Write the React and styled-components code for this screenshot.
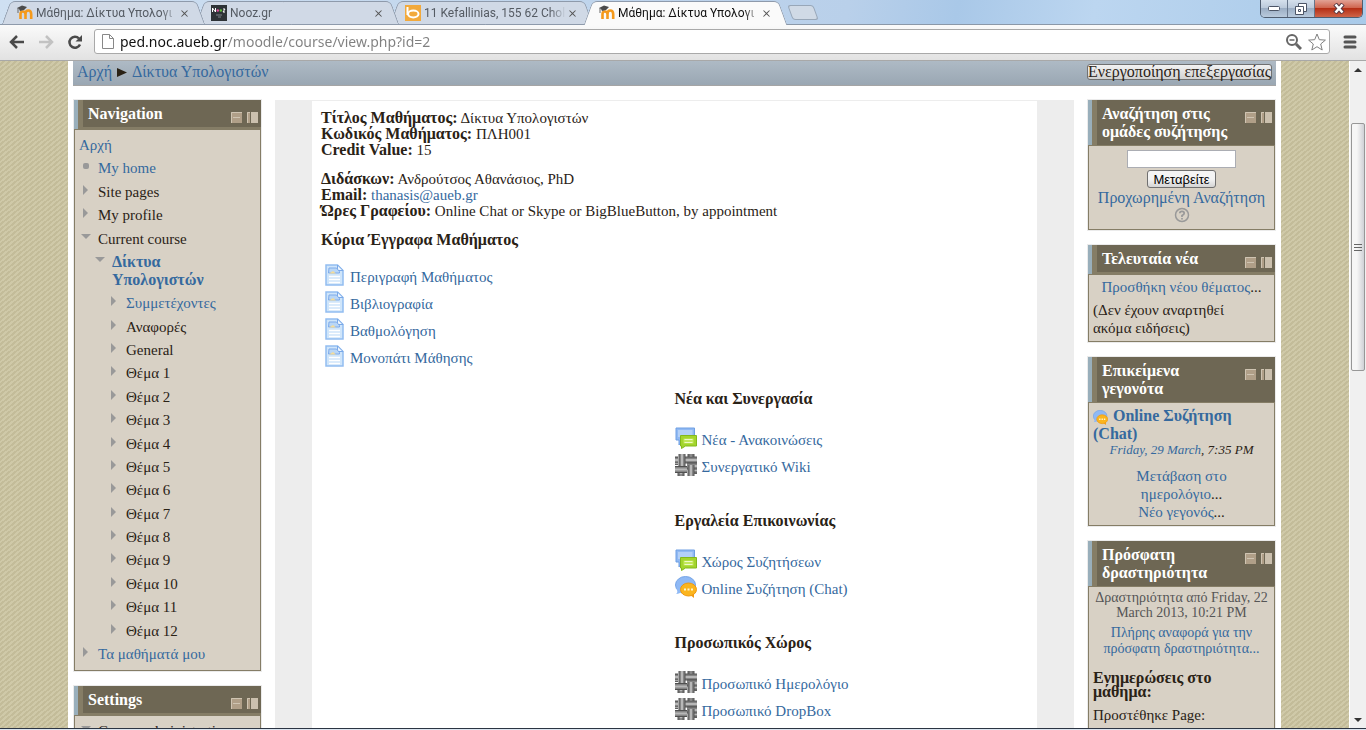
import React from 'react';
import styled, { createGlobalStyle, css } from 'styled-components';
import { HiMiniXMark } from 'react-icons/hi2';

const COLORS = {
  link: '#35699e',
  text: '#2a2216',
  head: '#6e6754',
  olive: '#857d66',
  sand: '#d8d1c5',
  strip: '#99afbb',
  grey: '#ededed',
};

const TABS = [
  { id: 1, icon: 'moodle', title: 'Μάθημα: Δίκτυα Υπολογι' },
  { id: 2, icon: 'nooz', title: 'Nooz.gr' },
  { id: 3, icon: 'bing', title: '11 Kefallinias, 155 62 Chol' },
  { id: 4, icon: 'moodle', title: 'Μάθημα: Δίκτυα Υπολογι', active: true },
];

const NAVIGATION = [
  { label: 'Αρχή', depth: 0, link: true },
  { label: 'My home', depth: 1, mark: 'dot', link: true },
  { label: 'Site pages', depth: 1, mark: 'closed' },
  { label: 'My profile', depth: 1, mark: 'closed' },
  { label: 'Current course', depth: 1, mark: 'open' },
  { label: 'Δίκτυα Υπολογιστών', depth: 2, mark: 'open', link: true, bold: true },
  { label: 'Συμμετέχοντες', depth: 3, mark: 'closed', link: true },
  { label: 'Αναφορές', depth: 3, mark: 'closed' },
  { label: 'General', depth: 3, mark: 'closed' },
  ...Array.from({ length: 12 }, (_, i) => ({ label: `Θέμα ${i + 1}`, depth: 3, mark: 'closed' })),
  { label: 'Τα μαθήματά μου', depth: 1, mark: 'closed', link: true },
];

const DOCUMENTS = ['Περιγραφή Μαθήματος', 'Βιβλιογραφία', 'Βαθμολόγηση', 'Μονοπάτι Μάθησης'];

const SECTIONS = [
  {
    title: 'Νέα και Συνεργασία',
    items: [
      { icon: 'forum', label: 'Νέα - Ανακοινώσεις' },
      { icon: 'wiki', label: 'Συνεργατικό Wiki' },
    ],
  },
  {
    title: 'Εργαλεία Επικοινωνίας',
    items: [
      { icon: 'forum', label: 'Χώρος Συζητήσεων' },
      { icon: 'chat', label: 'Online Συζήτηση (Chat)' },
    ],
  },
  {
    title: 'Προσωπικός Χώρος',
    items: [
      { icon: 'wiki', label: 'Προσωπικό Ημερολόγιο' },
      { icon: 'wiki', label: 'Προσωπικό DropBox' },
    ],
  },
];

/* ---------- icons ---------- */

function Favicon({ name }) {
  if (name === 'nooz') {
    return (
      <svg width="16" height="16" viewBox="0 0 16 16">
        <rect width="16" height="16" fill="#2e3337" />
        <path d="M1.500 7V3l3 4V3" stroke="#fff" fill="none" />
        <circle cx="6.800" cy="5.500" r="1.200" fill="#e44fa0" />
        <circle cx="9.800" cy="5.500" r="1.200" fill="#63c23b" />
        <path d="M12 4h2l-2 3h2" stroke="#fff" fill="none" />
        <path d="M5 10h6M7 12h3" stroke="#7d848a" />
      </svg>
    );
  }
  if (name === 'bing') {
    return (
      <svg width="16" height="16" viewBox="0 0 16 16">
        <rect width="16" height="16" fill="#f2a93b" />
        <path d="M2.500 2v8" stroke="#fff" strokeWidth="2" />
        <ellipse cx="8.300" cy="9" rx="5.200" ry="3.400" stroke="#fff" strokeWidth="2" fill="none" />
      </svg>
    );
  }
  return (
    <svg width="16" height="16" viewBox="0 0 16 16">
      <path d="M3.500 14V9q0-2.500 2.300-2.500T8.500 9v5M8.500 9q0-3.500 2.800-3.500T14.200 9v5" stroke="#f59a1c" strokeWidth="2.600" fill="none" />
      <path d="M0 3l5-2.500 5 1.500-3 3-4 1-1-2z" fill="#4b4b4b" />
      <path d="M1 3v5" stroke="#666" />
    </svg>
  );
}

function PageIcon() {
  return (
    <svg width="20" height="22" viewBox="0 0 20 22">
      <path d="M1 1h11.500L18 6.500V21H1z" fill="#cfe5fa" stroke="#93bdf1" strokeWidth="1.500" />
      <path d="M12.500 1v5.500H18z" fill="#eef6fe" stroke="#7aa9e8" />
      <path d="M4 4h7.500l3 3.500V9H3.500z" fill="#b9d6f6" stroke="#7fabea" />
      <path d="M4 9.500h7L8 7z" fill="#f4dc9a" />
      <path d="M4 12.500h11M4 15.500h11M4 18.500h11" stroke="#fff" strokeWidth="1.500" />
    </svg>
  );
}

function ForumIcon() {
  return (
    <svg width="22" height="22" viewBox="0 0 22 22">
      <path d="M1 1h18.500v12H8l-4 5v-5H1z" fill="#90b9f3" stroke="#6f9fe3" />
      <rect x="3" y="3" width="14.500" height="7" fill="#b3d0f8" />
      <path d="M5.500 8.500h16V19h-11l-4 2.500V19h-1z" fill="#a3d52d" stroke="#83b81c" />
      <path d="M8.500 11.500h10v5h-10z" fill="#c2e75b" />
      <path d="M9.500 12.500h8M9.500 15.500h8" stroke="#eefac7" />
    </svg>
  );
}

function ChatIcon({ size = 22 }) {
  return (
    <svg width={size} height={size} viewBox="0 0 22 22">
      <ellipse cx="10.500" cy="9" rx="10" ry="8.500" fill="#8fb9f5" stroke="#76a5e6" />
      <path d="M2 13q1 4-1 5 4 0 6-3z" fill="#8fb9f5" />
      <path d="M14 18l5 4v-6z" fill="#f29b16" />
      <ellipse cx="13.500" cy="13.500" rx="8" ry="6.500" fill="#fbb51e" stroke="#f0980f" />
      <path d="M9 13.500h2M12.500 13.500h2M16 13.500h2" stroke="#fff6cf" strokeWidth="2" />
    </svg>
  );
}

/* woven pipes: the later strands run over the earlier ones */
const STRANDS = [
  'M16 0v9', 'M6 13v9', 'M0 6h3', 'M19 16h3',
  'M10 6h12', 'M0 15.500h12',
  'M7 0v12', 'M12 12h10', 'M16 11v11',
];

function WikiIcon() {
  return (
    <svg width="22" height="22" viewBox="0 0 22 22">
      {STRANDS.map(d => (
        <g key={d}>
          <path d={d} stroke="#505050" strokeWidth="7" />
          <path d={d} stroke="#858585" strokeWidth="5" />
          <path d={d} stroke="#b8b8b8" strokeWidth="2" />
        </g>
      ))}
      <path d="M0 3.500h3M0 10.500h3M19 19.500h3M13 1h6M3 21h6" stroke="#5f5f5f" />
    </svg>
  );
}

function Mark({ type }) {
  return (
    <svg width="10" height="10" viewBox="0 0 10 10">
      {type === 'dot' && <rect x="2" y="2" width="6" height="6" rx="2" fill="#999" />}
      {type === 'closed' && <path d="M2 0v10l5-5z" fill="#999" />}
      {type === 'open' && <path d="M0 2h10L5 7z" fill="#999" />}
    </svg>
  );
}

const ICONS = { forum: ForumIcon, wiki: WikiIcon, chat: ChatIcon };

/* ---------- blocks ---------- */

function Block({ title, children }) {
  return (
    <BlockWrapper>
      <BlockHead>
        <BlockTitle>{title}</BlockTitle>
        <BlockTools>
          <ToolButton aria-label="Hide block">
            <svg width="11" height="11" viewBox="0 0 11 11">
              <rect width="11" height="11" fill="#b09f88" />
              <path d="M.5 11V.5H11M2 5.500h7" stroke="#cfc4b2" fill="none" />
            </svg>
          </ToolButton>
          <ToolButton aria-label="Dock block">
            <svg width="11" height="11" viewBox="0 0 11 11">
              <path d="M0 0h3v11H0z" fill="#b09f88" />
              <path d="M.5 11V.5H3" stroke="#cfc4b2" fill="none" />
              <path d="M4 0h7v11H4z" fill="#cbc0ae" />
            </svg>
          </ToolButton>
        </BlockTools>
      </BlockHead>
      <BlockBody>{children}</BlockBody>
    </BlockWrapper>
  );
}

function NavigationTree() {
  return (
    <Tree>
      {NAVIGATION.map(item => (
        <TreeItem key={item.label} $depth={item.depth} $bold={item.bold}>
          {item.mark && <Mark type={item.mark} />}
          {item.link ? <Link href="#">{item.label}</Link> : <span>{item.label}</span>}
        </TreeItem>
      ))}
    </Tree>
  );
}

function BrowserBar() {
  return (
    <header>
      <TabStrip>
        {TABS.map((tab, i) => (
          <Tab key={tab.id} $active={tab.active} $order={TABS.length - i}>
            <Favicon name={tab.icon} />
            <TabTitle>{tab.title}</TabTitle>
            <TabClose aria-label="Close tab"><HiMiniXMark size={13} /></TabClose>
          </Tab>
        ))}
        <NewTab aria-label="New tab" />
        <WindowButtons>
          <WindowButton aria-label="Minimize">
            <svg width="12" height="6"><rect x="0.500" y="0.500" width="11" height="4" rx="1" fill="#fff" stroke="#4c5566" /></svg>
          </WindowButton>
          <WindowButton aria-label="Restore">
            <svg width="12" height="12" fill="#fff" stroke="#4c5566">
              <path d="M3.500.5h8v8h-8z" />
              <path d="M.5 3.500h8v8h-8z" />
              <path d="M3.500 6.500h2v2h-2z" />
            </svg>
          </WindowButton>
          <WindowButton aria-label="Close" $close>
            <svg width="12" height="11" viewBox="0 0 12 11">
              <path d="M2 1l8 9M10 1l-8 9" stroke="#5b3a44" strokeWidth="4.500" />
              <path d="M2.500 1.500l7 8M9.500 1.500l-7 8" stroke="#fff" strokeWidth="2.500" />
            </svg>
          </WindowButton>
        </WindowButtons>
      </TabStrip>
      <Toolbar>
        <BarButton aria-label="Back">
          <svg width="16" height="14" fill="none" stroke="#4a4a4a" strokeWidth="2.500"><path d="M15 7H2M8 1L2 7l6 6" /></svg>
        </BarButton>
        <BarButton aria-label="Forward">
          <svg width="16" height="14" fill="none" stroke="#c2c2c2" strokeWidth="2.500"><path d="M1 7h13M8 1l6 6-6 6" /></svg>
        </BarButton>
        <BarButton aria-label="Reload">
          <svg width="16" height="16" fill="none" stroke="#4a4a4a" strokeWidth="2.500">
            <path d="M13 10.500A5.500 5.500 0 1 1 12 4.500" />
            <path d="M15 1v6.500H8.500z" fill="#4a4a4a" stroke="none" />
          </svg>
        </BarButton>
        <AddressBox>
          <svg width="12" height="15" fill="#fff" stroke="#888"><path d="M.5.5h7l4 4v10H.5zM7.500.5v4h4" /></svg>
          <AddressInput aria-label="Address" defaultValue="ped.noc.aueb.gr/moodle/course/view.php?id=2" />
          <svg width="16" height="16" fill="none" stroke="#666" strokeWidth="2">
            <circle cx="6" cy="6" r="5" />
            <path d="M10 10l5 5" strokeWidth="3" />
            <path d="M3.500 6h5" strokeWidth="1.500" />
          </svg>
          <svg width="18" height="18" viewBox="0 0 18 18" fill="#fff" stroke="#808080" strokeLinejoin="round">
            <path d="M9 1l2.300 5.700 6.100.4-4.700 3.900 1.500 6L9 13.700 3.800 17l1.500-6L.6 7.100l6.100-.4z" />
          </svg>
        </AddressBox>
        <BarButton aria-label="Menu">
          <svg width="14" height="14" stroke="#555" strokeWidth="3" strokeLinecap="round"><path d="M2 2h10M2 7h10M2 12h10" /></svg>
        </BarButton>
      </Toolbar>
    </header>
  );
}

function App() {
  return (
    <Window>
      <GlobalStyle />
      <BrowserBar />
      <Viewport>
        <Backdrop>
          <Page>
            <Breadcrumb>
              <Link href="#">Αρχή</Link>
              <svg width="10" height="9"><path d="M0 0v9l10-4.500z" fill={COLORS.text} /></svg>
              <Link href="#">Δίκτυα Υπολογιστών</Link>
              <EditButton>Ενεργοποίηση επεξεργασίας</EditButton>
            </Breadcrumb>
            <Columns>
              <Column>
                <Block title="Navigation"><NavigationTree /></Block>
                <Block title="Settings">
                  <SettingsRow><Mark type="open" />Course administration</SettingsRow>
                </Block>
              </Column>

              <Main>
                <Intro>
                  <p>
                    <b>Τίτλος Μαθήματος:</b> Δίκτυα Υπολογιστών<br />
                    <b>Κωδικός Μαθήματος:</b> ΠΛΗ001<br />
                    <b>Credit Value:</b> 15
                  </p>
                  <p>
                    <b>Διδάσκων:</b> Ανδρούτσος Αθανάσιος, PhD<br />
                    <b>Email:</b> <Link href="#">thanasis@aueb.gr</Link><br />
                    <b>Ώρες Γραφείου:</b> Online Chat or Skype or BigBlueButton, by appointment
                  </p>
                  <SectionTitle>Κύρια Έγγραφα Μαθήματος</SectionTitle>
                  <Documents>
                    {DOCUMENTS.map(label => (
                      <Activity key={label}><PageIcon /><Link href="#">{label}</Link></Activity>
                    ))}
                  </Documents>
                </Intro>
                {SECTIONS.map(section => (
                  <Section key={section.title}>
                    <SectionTitle>{section.title}</SectionTitle>
                    <ul>
                      {section.items.map(item => {
                        const Icon = ICONS[item.icon];
                        return (
                          <Activity key={item.label}><Icon /><Link href="#">{item.label}</Link></Activity>
                        )
                      })}
                    </ul>
                  </Section>
                ))}
              </Main>

              <Column>
                <Block title="Αναζήτηση στις ομάδες συζήτησης">
                  <SearchForm>
                    <SearchInput aria-label="Αναζήτηση" />
                    <SearchButton type="button">Μεταβείτε</SearchButton>
                    <Link href="#">Προχωρημένη Αναζήτηση</Link>
                    <HelpButton type="button" aria-label="Help">
                      <svg width="16" height="16" viewBox="0 0 16 16" fill="none" stroke="#999">
                        <circle cx="8" cy="8" r="6.500" strokeWidth="1.500" />
                        <path d="M5.800 6.300Q5.800 4.300 8 4.300t2.200 1.900Q10.200 7.500 8 8.500V10M8 11v1.500" strokeWidth="1.700" />
                      </svg>
                    </HelpButton>
                  </SearchForm>
                </Block>

                <Block title="Τελευταία νέα">
                  <Centered><Link href="#">Προσθήκη νέου θέματος</Link>...</Centered>
                  <Note>(Δεν έχουν αναρτηθεί<br />ακόμα ειδήσεις)</Note>
                </Block>

                <Block title={<>Επικείμενα<br />γεγονότα</>}>
                  <EventTitle>
                    <ChatIcon size={15} />
                    <Link href="#">Online Συζήτηση<br />(Chat)</Link>
                  </EventTitle>
                  <EventDate><Link href="#">Friday, 29 March</Link>, 7:35 PM</EventDate>
                  <EventLinks>
                    <Link href="#">Μετάβαση στο<br />ημερολόγιο</Link>...<br />
                    <Link href="#">Νέο γεγονός</Link>...
                  </EventLinks>
                </Block>

                <Block title="Πρόσφατη δραστηριότητα">
                  <Since>Δραστηριότητα από Friday, 22 March 2013, 10:21 PM</Since>
                  <FullReport><Link href="#">Πλήρης αναφορά για την πρόσφατη δραστηριότητα...</Link></FullReport>
                  <UpdatesTitle>Ενημερώσεις στο<br />μάθημα:</UpdatesTitle>
                  <Note>Προστέθηκε Page:</Note>
                </Block>
              </Column>
            </Columns>
          </Page>
        </Backdrop>
        <Scrollbar>
          <ScrollArrow aria-label="Scroll up"><svg width="8" height="4"><path d="M0 4l4-4 4 4z" fill="#333" /></svg></ScrollArrow>
          <Track>
            <Thumb><svg width="8" height="8" stroke="#666"><path d="M0 1.500h8M0 4.500h8M0 7.500h8" /></svg></Thumb>
          </Track>
          <ScrollArrow aria-label="Scroll down"><svg width="8" height="4"><path d="M0 0h8L4 4z" fill="#333" /></svg></ScrollArrow>
        </Scrollbar>
      </Viewport>
      <Taskbar />
    </Window>
  );
}

export default App;

const GlobalStyle = createGlobalStyle`
  * {
    box-sizing: border-box;
  }

  body {
    margin: 0;
    overflow: hidden;
  }

  p, ul, h2, h3 {
    margin: 0;
    padding: 0;
  }

  b {
    font-size: 16px;
  }

  svg {
    display: block;
    flex: none;
  }

  button, input {
    margin: 0;
    padding: 0;
  }
`

const Window = styled.div`
  display: flex;
  flex-direction: column;
  height: 100vh;
  color: ${COLORS.text};
  font: 15px/18px Georgia, 'Liberation Serif', serif;
`

const TabStrip = styled.div`
  display: flex;
  align-items: flex-end;
  height: 25px;
  padding-left: 2px;
  background: linear-gradient(100deg, #cfe0f2 0%, #b9d0ea 62%, #a9c8e8 70%, #bcd6f0 80%, #a9cae9 100%);
  border-bottom: 1px solid #8b98a8;
`

const Tab = styled.div`
  position: relative;
  z-index: ${props => (props.$active ? 10 : props.$order)};
  display: flex;
  flex: 0 1 203px;
  align-items: center;
  min-width: 0;
  height: 24px;
  margin: 0 -9px -1px 0;
  padding: 0 14px 0 15px;
  color: ${props => (props.$active ? '#111' : '#555b63')};
  font: 12px/16px Roboto, sans-serif;

  &::before,
  &::after {
    content: '';
    position: absolute;
    z-index: -1;
    top: 0;
    bottom: 0;
    background: ${props => (props.$active ? '#fafafa' : '#d0d9e6')};
    border: 0 solid #8e9aab;
    border-top-width: 1px;
    ${props => !props.$active && css`border-bottom-width: 1px;`}
  }

  &::before {
    left: 4px;
    right: 50%;
    border-left-width: 1px;
    border-top-left-radius: 5px;
    transform: skewX(-20deg);
  }

  &::after {
    left: 45%;
    right: 4px;
    border-right-width: 1px;
    border-top-right-radius: 5px;
    transform: skewX(20deg);
  }
`

const TabTitle = styled.span`
  flex: 1;
  min-width: 0;
  margin-left: 3px;
  overflow: hidden;
  white-space: nowrap;
  mask-image: linear-gradient(to left, transparent, #000 16px);
`

const TabClose = styled.button`
  display: flex;
  background: none;
  border: 0;
  color: #555;
`

const NewTab = styled.button`
  width: 26px;
  height: 15px;
  margin: 0 0 4px 12px;
  background: #d0dae6;
  border: 1px solid #98a7b8;
  border-radius: 3px;
  transform: skewX(20deg);
`

const WindowButtons = styled.div`
  display: flex;
  align-self: flex-start;
  height: 18px;
  margin: 0 3px 0 auto;
  border: 1px solid #4f5d70;
  border-top: 0;
  border-radius: 0 0 5px 5px;
  overflow: hidden;
`

const WindowButton = styled.button`
  display: flex;
  align-items: center;
  justify-content: center;
  width: ${props => (props.$close ? '47px' : '27px')};
  border: 0;
  border-right: ${props => (props.$close ? '0' : '1px solid #66758a')};
  background: ${props => (props.$close
    ? 'linear-gradient(#e2a295, #d06650 45%, #b52f16 50%, #cf6448)'
    : 'linear-gradient(#d5e0ec, #bccadb 45%, #9caec4 50%, #b9cadc)')};
`

const Toolbar = styled.div`
  display: flex;
  align-items: center;
  gap: 13px;
  height: 36px;
  padding: 0 9px 2px;
  background: linear-gradient(#fafafa, #e2e2e2);
  border-bottom: 1px solid #a8a8a8;
`

const BarButton = styled.button`
  display: flex;
  background: none;
  border: 0;
`

const AddressBox = styled.div`
  display: flex;
  flex: 1;
  align-items: center;
  gap: 6px;
  height: 25px;
  margin-left: -2px;
  padding: 0 3px 0 7px;
  background: #fff;
  border: 1px solid #a9a9a9;
  border-radius: 3px;
`

/* host name dark, path lighter */
const AddressInput = styled.input`
  flex: 1;
  min-width: 0;
  height: 24px;
  border: 0;
  outline: 0;
  background: linear-gradient(to right, #111 107px, #808080 107px);
  background-clip: text;
  -webkit-text-fill-color: transparent;
  font: 14px/20px 'Noto Sans', sans-serif;
`

const Viewport = styled.div`
  display: flex;
  flex: 1;
  min-height: 0;
`

const Backdrop = styled.div`
  flex: 1;
  min-width: 0;
  overflow: hidden;
  padding: 0 68px;
  background: linear-gradient(to bottom right, #cfc9a8 25%, #c3bc99 25% 50%, #cfc9a8 50% 75%, #c3bc99 75%) 0 0 / 6px 5px;
`

const Page = styled.div`
  padding: 0 5px;
  background: #fff;
`

const Link = styled.a`
  color: ${COLORS.link};
  text-decoration: none;
`

const Breadcrumb = styled.nav`
  display: flex;
  align-items: center;
  gap: 5px;
  height: 25px;
  padding: 0 4px 2px;
  background: linear-gradient(#aebac5, #9aa7b3);
  border-bottom: 1px solid #a5a5a5;
  font-size: 16px;
`

const EditButton = styled.button`
  height: 16px;
  margin-left: auto;
  background: linear-gradient(#f2f2f2, #d2d2d2);
  border: 1px solid #707070;
  border-radius: 3px;
  color: ${COLORS.text};
  font: 16px/14px Georgia, 'Liberation Serif', serif;
`

const Columns = styled.div`
  display: grid;
  grid-template-columns: 187px 1fr 187px;
  gap: 14px;
  padding: 14px 1px;
`

const Column = styled.div`
  display: flex;
  flex-direction: column;
  gap: 15px;

  > :last-child {
    flex: 1;
  }
`

const BlockWrapper = styled.section`
  display: flex;
  flex-direction: column;
  box-shadow: 0 0 0 1px #ebebeb;
`

const BlockHead = styled.div`
  position: relative;
  display: flex;
  align-items: flex-start;
  min-height: 29px;
  background: ${COLORS.olive};
  border-left: 4px solid ${COLORS.strip};
`

const BlockTitle = styled.h2`
  flex: 1;
  margin-left: 5px;
  padding: 5px 36px 4px 5px;
  background: ${COLORS.head};
  color: #fff;
  font-size: 16px;
  line-height: 18px;
`

const BlockTools = styled.div`
  position: absolute;
  top: 12px;
  right: 3px;
  display: flex;
  gap: 5px;
`

const ToolButton = styled.button`
  display: flex;
  background: none;
  border: 0;
`

const BlockBody = styled.div`
  flex: 1;
  padding: 3px 4px 4px;
  background: ${COLORS.sand};
  border: 1px solid ${COLORS.olive};
`

const Tree = styled.ul`
  display: flex;
  flex-direction: column;
  justify-content: space-between;
  min-height: 533px;
  padding: 3px 24px 3px 0;
  list-style: none;
`

const TreeItem = styled.li`
  display: flex;
  align-items: flex-start;
  gap: 7px;
  padding-left: ${props => (props.$depth ? props.$depth * 14 - 12 : 0)}px;
  font-size: ${props => (props.$bold ? 16 : 15)}px;
  font-weight: ${props => (props.$bold ? 'bold' : 'normal')};

  svg {
    margin-top: 2px;
  }
`

const SettingsRow = styled.div`
  display: flex;
  gap: 7px;
  padding: 3px 0 8px 2px;

  svg {
    margin-top: 2px;
  }
`

const Main = styled.main`
  background: #fff;
  border: 0 solid ${COLORS.grey};
  border-width: 1px 37px 0;
  line-height: 16px;

  ul {
    list-style: none;
  }
`

const Intro = styled.div`
  padding: 9px 9px 20px;

  p {
    margin-bottom: 13px;
  }
`

const Documents = styled.ul`
  margin-top: 15px;
  padding-left: 4px;
`

const Activity = styled.li`
  display: flex;
  align-items: center;
  gap: 5px;
  height: 27px;

  svg {
    margin-bottom: 4px;
  }
`

const Section = styled.section`
  padding: 0 0 33px 50%;

  ul {
    margin-top: 19px;
  }
`

const SectionTitle = styled.h3`
  font-size: 16px;
  line-height: 16px;
`

const SearchForm = styled.form`
  display: flex;
  flex-direction: column;
  align-items: center;
  padding-top: 1px;
  font-size: 16px;
`

const SearchInput = styled.input`
  width: 109px;
  height: 18px;
  border: 1px solid #abadb3;
  background: #fff;
`

const SearchButton = styled.button`
  height: 18px;
  margin: 2px 0 1px;
  padding: 0 5px;
  background: linear-gradient(#f4f4f4 50%, #d4d4d4);
  border: 1px solid #707070;
  border-radius: 3px;
  color: #000;
  font: 13px/15px 'Liberation Sans', sans-serif;
`

const HelpButton = styled.button`
  display: flex;
  margin-bottom: 2px;
  background: none;
  border: 0;
`

const Centered = styled.p`
  text-align: center;
`

const Note = styled.p`
  padding-top: 5px;
`

const EventTitle = styled.div`
  padding-top: 1px;
  font-size: 16px;
  font-weight: bold;

  svg {
    display: inline-block;
    margin-right: 5px;
    vertical-align: -4px;
  }
`

const EventDate = styled.p`
  font-size: 13px;
  font-style: italic;
  line-height: 14px;
  text-align: center;
`

const EventLinks = styled.p`
  padding-top: 10px;
  text-align: center;
`

const Since = styled.p`
  color: #555;
  font-size: 14px;
  line-height: 15px;
  text-align: center;
`

const FullReport = styled.p`
  padding: 5px 8px 0;
  font-size: 14px;
  line-height: 16px;
  text-align: center;
`

const UpdatesTitle = styled.h3`
  padding: 14px 0 2px;
  font-size: 16px;
  line-height: 14px;
`

const Scrollbar = styled.div`
  display: flex;
  flex-direction: column;
  width: 17px;
  background: #f0f0f0;
  border-left: 1px solid #fff;
`

const ScrollArrow = styled.button`
  display: flex;
  align-items: center;
  justify-content: center;
  height: 17px;
  background: none;
  border: 0;
`

const Track = styled.div`
  flex: 1;
  padding: 45px 1px 0;
`

const Thumb = styled.div`
  display: flex;
  align-items: center;
  justify-content: center;
  height: 248px;
  background: linear-gradient(to right, #f6f6f6 40%, #d0d1d6);
  border: 1px solid #979797;
  border-radius: 2px;
`

const Taskbar = styled.footer`
  height: 2px;
  background: #dbe5f0;
  border-top: 1px solid #2b3442;
`
